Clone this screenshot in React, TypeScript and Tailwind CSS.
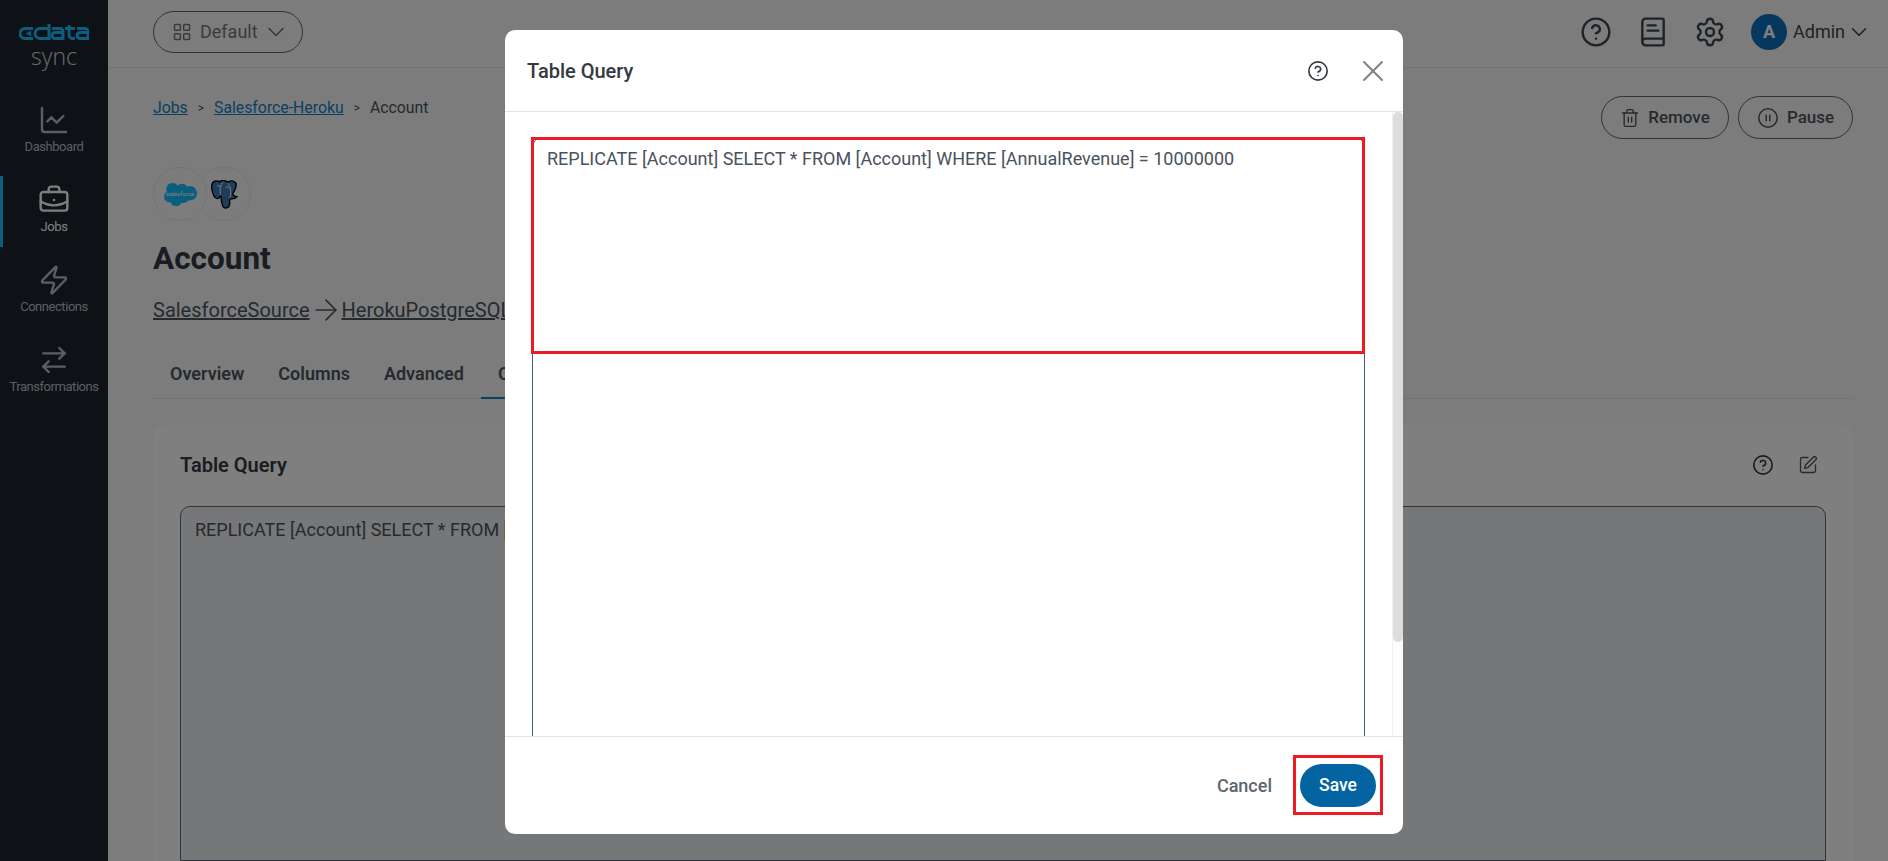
import {
  ArrowRight,
  ArrowRightLeft,
  BookText,
  BriefcaseBusiness,
  ChartLine,
  ChevronDown,
  CircleHelp,
  CirclePause,
  LayoutGrid,
  Settings,
  SquarePen,
  Trash2,
  X,
  Zap,
} from "lucide-react";
import { SiSalesforce } from "react-icons/si";

const QUERY = "REPLICATE [Account] SELECT * FROM [Account] WHERE [AnnualRevenue] = 10000000";

const navItems = [
  { label: "Dashboard", icon: ChartLine },
  { label: "Jobs", icon: BriefcaseBusiness, active: true },
  { label: "Connections", icon: Zap },
  { label: "Transformations", icon: ArrowRightLeft },
];

const tabs = ["Overview", "Columns", "Advanced", "Query"];

const CDataLogo = () => (
  <svg width="70" height="16" viewBox="0 0 70 16" fill="none" stroke="#18bcff" strokeWidth="3">
    <path d="M14 4.5H6a5 5 0 0 0 0 10h8" />
    <path d="M7 9.5l5-2.5v5z" fill="#18bcff" strokeWidth="0.5" />
    <path d="M30 0v14.5H21a5 5 0 0 1 0-10h9" />
    <path d="M33 4.5h8a3 3 0 0 1 3 3v7h-8a3 3 0 0 1 0-6h8" />
    <path d="M46 4.5h10M50 1v9.5a4 4 0 0 0 4 4h2" />
    <path d="M58 4.5h8a3 3 0 0 1 3 3v7h-8a3 3 0 0 1 0-6h8" />
  </svg>
);

const PostgresLogo = () => (
  <svg width="27" height="29" viewBox="0 0 26 28">
    <path
      d="M5 1C1 1 0 5 1 10c1 4 2 8 5 8 2 0 3-2 3.5-3 .5 4 .5 9 2.5 11 2 2 6 1 6-3v-5c1 0 5 1 7-2-3 0-4-1-4-3 2-3 4-7 3-10-2-3-6-2-8-1-3-2-7-2-8 0-1-1-2-1-3-1z"
      fill="#3f78b5"
      stroke="#000"
      strokeWidth="1.3"
    />
    <path d="M9.5 15C8 9 9 4 12 2M18 18c2-6 1-12-2-15M6 6c1-1 3-1 3 1M14 7c2-1 3 0 3 1" fill="none" stroke="#fff" strokeWidth="0.9" />
  </svg>
);

const Sidebar = () => (
  <aside className="flex w-[108px] shrink-0 flex-col bg-[#1c232c]">
    <div className="flex h-[96px] flex-col items-center pt-[24px]">
      <CDataLogo />
      <span className="mt-[1px] font-['Open_Sans',sans-serif] text-[23px] leading-[30px] font-light text-[#d5d5d5]">sync</span>
    </div>
    <nav className="flex flex-col gap-[9px]">
      {navItems.map(({ label, icon: Icon, active }) => (
        <div
          key={label}
          className={`flex h-[71px] flex-col items-center justify-center gap-[3px] border-l-[3px] pr-[3px] pb-[4px] ${
            active ? "border-[#18bcff] text-white" : "border-transparent text-[#b9bec4]"
          }`}
        >
          <Icon size={32} strokeWidth={1.8} />
          <span className="text-[13px] leading-[16px] tracking-[-0.45px]">{label}</span>
        </div>
      ))}
    </nav>
  </aside>
);

const TopBar = () => (
  <header className="flex h-[68px] shrink-0 items-center justify-between border-b border-[#e4e4e4] pr-[19px] pb-[4px] pl-[45px]">
    <button className="flex h-[42px] w-[150px] items-center rounded-full border border-[#5a6672] pl-[18px] text-[18px] text-[#6f7882]">
      <LayoutGrid size={20} strokeWidth={1.8} className="mr-[8px]" />
      Default
      <ChevronDown size={28} strokeWidth={1.5} className="ml-[4px]" />
    </button>
    <div className="flex items-center gap-[25px] text-[#3d4651]">
      <CircleHelp size={32} strokeWidth={1.8} />
      <BookText size={32} strokeWidth={1.8} />
      <Settings size={32} strokeWidth={1.8} />
      <div className="flex items-center">
        <span className="flex h-[36px] w-[36px] items-center justify-center rounded-full bg-[#0c70be] text-[18px] font-bold text-white">A</span>
        <span className="ml-[6px] text-[18px]">Admin</span>
        <ChevronDown size={26} strokeWidth={1.5} className="ml-[1px] -mr-[3px]" />
      </div>
    </div>
  </header>
);

const Breadcrumbs = () => (
  <div className="flex items-center pt-[16px] text-[15.8px] leading-[20px] text-[#4b5560]">
    <a className="text-[#1580c8] underline">Jobs</a>
    <span className="mx-[10px] text-[12px]">&gt;</span>
    <a className="text-[#1580c8] underline">Salesforce-Heroku</a>
    <span className="mx-[10px] text-[12px]">&gt;</span>
    <span>Account</span>
  </div>
);

const JobContent = () => (
  <main className="flex min-h-0 flex-1 flex-col pr-[35px] pl-[45px]">
    <div className="flex h-[70px] items-start justify-between pt-[14px]">
      <Breadcrumbs />
      <div className="flex gap-[9px] pt-[14px] text-[17px] font-medium text-[#4b5560]">
        <button className="flex h-[43px] w-[128px] items-center justify-center gap-[8px] rounded-full border border-[#5a6672]">
          <Trash2 size={20} strokeWidth={1.6} />
          Remove
        </button>
        <button className="flex h-[43px] w-[115px] items-center justify-center gap-[8px] rounded-full border border-[#5a6672]">
          <CirclePause size={22} strokeWidth={1.6} />
          Pause
        </button>
      </div>
    </div>
    <div className="mt-[29px] flex">
      <span className="relative z-[1] flex h-[54px] w-[54px] items-center justify-center rounded-full border border-[#e8e8e8] bg-[#f8f8f8]">
        <SiSalesforce size={33} className="text-[#18bcff]" />
        <span className="absolute text-[6px] leading-none text-white">salesforce</span>
      </span>
      <span className="-ml-[10px] flex h-[54px] w-[54px] items-center justify-center rounded-full border border-[#e8e8e8] bg-[#f8f8f8]">
        <PostgresLogo />
      </span>
    </div>
    <h1 className="mt-[18px] text-[31.5px] leading-[40px] font-bold text-[#333a42]">Account</h1>
    <div className="mt-[19px] flex items-center text-[20px] leading-[24px] text-[#4b5560]">
      <a className="underline">SalesforceSource</a>
      <ArrowRight size={34} strokeWidth={1.1} className="-mx-[1px] -my-[5px]" />
      <a className="underline">HerokuPostgreSQL</a>
    </div>
    <div className="mt-[27px] flex h-[50px] shrink-0 border-b border-[#e4e4e4] text-[18px] font-semibold text-[#4b5560]">
      {tabs.map((tab, i) => (
        <div key={tab} className={`flex items-center px-[17px] ${i === 3 ? "-mb-px border-b-2 border-[#1580c8]" : ""}`}>
          {tab}
        </div>
      ))}
    </div>
    <section className="mt-[26px] flex min-h-0 flex-1 flex-col rounded-t-[12px] bg-white px-[27px]">
      <div className="flex h-[81px] shrink-0 items-center justify-between pb-[2px]">
        <h2 className="text-[20px] font-semibold text-[#333a42]">Table Query</h2>
        <div className="flex items-center gap-[24px] pr-[8px] text-[#333a42]">
          <CircleHelp size={22} strokeWidth={1.8} />
          <SquarePen size={20} strokeWidth={1.6} className="text-[#4b5560]" />
        </div>
      </div>
      <div className="flex-1 rounded-t-[10px] border border-[#5a6672] bg-[#eceef1] px-[14px] py-[9px] text-[18px] text-[#4b5560]">{QUERY}</div>
    </section>
  </main>
);

const QueryDialog = () => (
  <div className="absolute inset-0 z-20 flex justify-center bg-black/50 pt-[30px] pl-[20px]">
    <div className="relative flex h-[804px] w-[898px] flex-col overflow-hidden rounded-[10px] bg-white">
      <div className="flex h-[82px] shrink-0 items-center justify-between border-b border-[#e2e4e7] pr-[12px] pl-[22px]">
        <h2 className="text-[20px] font-medium text-[#333a42]">Table Query</h2>
        <div className="flex items-center gap-[26px]">
          <CircleHelp size={22} strokeWidth={1.8} className="text-[#333a42]" />
          <X size={36} strokeWidth={1.3} className="text-[#808080]" />
        </div>
      </div>
      <div className="flex min-h-0 flex-1">
        <div className="min-w-0 flex-1 overflow-hidden pt-[25px] pr-[27px] pl-[27px]">
          <div className="h-[800px] rounded-t-[10px] border border-[#41627a] px-[14px] py-[9px] text-[18px] leading-[24px] text-[#49525d]">{QUERY}</div>
        </div>
        <div className="w-[11px] shrink-0 border-l border-[#f0f0f0] bg-[#fdfdfd]">
          <div className="h-[530px] rounded-full bg-[#dddddd]" />
        </div>
      </div>
      <div className="flex h-[98px] shrink-0 items-start justify-end gap-[28px] border-t border-[#e2e4e7] pt-[27px] pr-[27px]">
        <button className="h-[43px] text-[18px] font-medium text-[#5c6670]">Cancel</button>
        <button className="h-[43px] w-[76px] rounded-full bg-[#0464a1] text-[17.5px] font-medium text-white">Save</button>
      </div>
      {/* red callouts */}
      <div className="absolute top-[107px] left-[26px] h-[217px] w-[834px] border-[3px] border-[#ed1c24]" />
      <div className="absolute top-[725px] left-[788px] h-[60px] w-[90px] border-[3px] border-[#ed1c24]" />
    </div>
  </div>
);

export default function App() {
  return (
    <div className="relative flex h-[861px] overflow-hidden bg-[#f8f8f8] font-['Roboto',sans-serif]">
      <Sidebar />
      <div className="flex min-w-0 flex-1 flex-col">
        <TopBar />
        <JobContent />
      </div>
      <QueryDialog />
    </div>
  );
}
